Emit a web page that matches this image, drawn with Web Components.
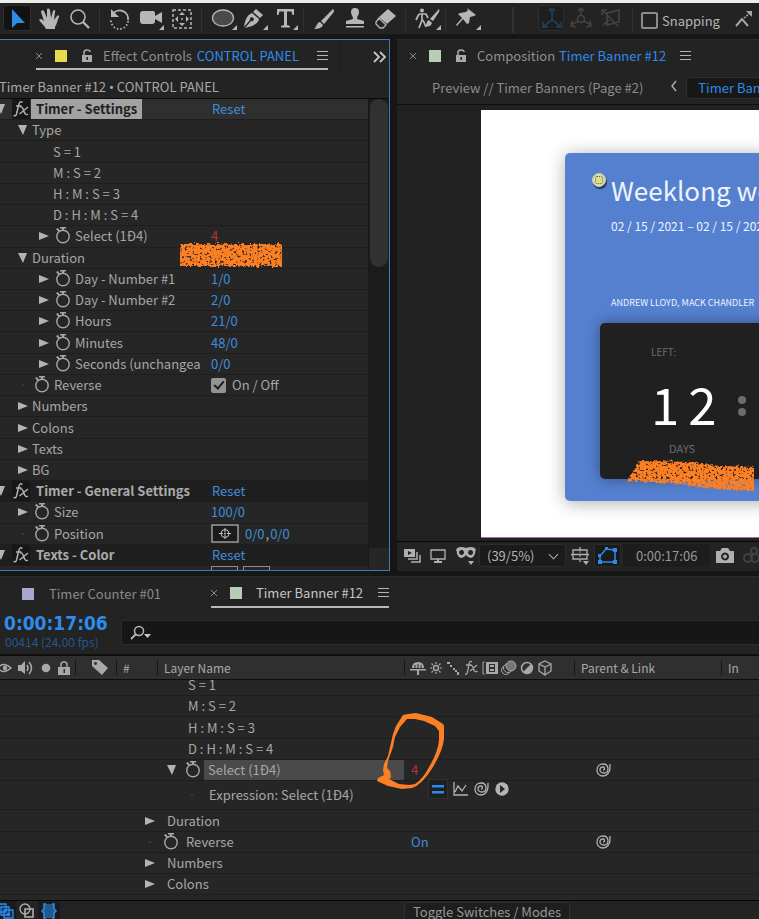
<!DOCTYPE html>
<html lang="en">
<head>
<meta charset="utf-8">
<title>Timer Banner #12</title>
<style>
html, body { margin: 0; height: 100%; }
body {
  --ui: "Noto Sans CJK SC", "Noto Sans", sans-serif;
  --panel: #232323; --row: #262626; --gap: #161616; --text: #a6a6a6; --blue: #3e8ddd; --accent: #2d8ceb;
  --line: #1e1e1e;
  background: var(--gap); color: var(--text); font: 13px/20px var(--ui);
}
</style>
</head>
<body>
<studio-app></studio-app>
<script>
const ICONS = {
  select: [26, 26, '<path d="M8 4v19l5-5h8z" fill="#2d8ceb"/>'],
  hand: [22, 22, '<path d="M8 21c-2-4-5-6-7-9 1-2 3-1 5 1L3 4c0-2 2-2 3-1l3 7V2c0-2 2-2 3 0l1 8 2-7c1-2 3-1 2 1l-1 8 3-4c1-1 3 0 2 1-2 4-2 7-4 10v2z"/>'],
  zoom: [22, 22, '<circle cx="9" cy="9" r="7" fill="none" stroke="currentColor" stroke-width="1.6"/><path d="M14 14l6 6" stroke="currentColor" stroke-width="2.4"/>'],
  rotate: [22, 22, '<path d="M4 6A8.300 8.300 0 0 1 19 12" fill="none" stroke="currentColor" stroke-width="1.800"/><path d="M2 1v8h8z"/><path d="M19 13A8.300 8.300 0 0 1 2 12" fill="none" stroke="currentColor" stroke-width="1.800" stroke-dasharray="1.500 2"/>'],
  camera: [24, 22, '<path d="M1 6q0-3 3-3h10q2 0 2 2v3l7-4v11l-7-4v2q0 3-3 3H4q-3 0-3-3z"/><path d="M25 17v5h-5z"/>'],
  anchor: [22, 22, '<rect x="2" y="2" width="18" height="18" fill="none" stroke="currentColor" stroke-width="1.500" stroke-dasharray="3 2"/><path d="M11 4l3 3H8zM11 18l3-3H8zM4 11l3-3v6zM18 11l-3-3v6z"/><circle cx="11" cy="11" r="1"/>'],
  ellipse: [26, 22, '<g transform="translate(2)"><ellipse cx="12" cy="10" rx="10.500" ry="8" fill="#4a4a4a" stroke="currentColor" stroke-width="1.300"/><path d="M26 17v5h-5z"/></g>'],
  pen: [26, 22, '<g transform="translate(2)"><path d="M14 1l7 6-3 3-7-6zM10 5l7 6c-1 5-6 7-14 9l6-7a2 2 0 1 0-1-1l-6 7C3 12 5 7 10 5z"/><path d="M26 17v5h-5z"/></g>'],
  type: [24, 22, '<g transform="translate(3)"><path d="M2 1h17v6h-1.500l-1-3.500H12V17l3 1v1.500H6V18l3-1V3.500H4.500l-1 3.500H2z"/><path d="M23 17v5h-5z"/></g>'],
  brush: [22, 22, '<path d="M20 1q2 1 0 4l-9 11-3-3zM7 14l3 3c-1 3-5 4-9 4 3-2 2-6 6-7z"/>'],
  stamp: [22, 22, '<path d="M7 4a4 4 0 0 1 8 0c0 3-2 4-2 7l7 2v3H2v-3l7-2c0-3-2-4-2-7z"/><path d="M2 18h18v1.500H2z"/>'],
  eraser: [22, 22, '<path d="M13 1l8 7-9 8-8-7z"/><path d="M4 10l7 7-3 3H5l-4-4v-2z" fill="none" stroke="currentColor" stroke-width="1.300"/>'],
  roto: [26, 22, '<g transform="translate(2)"><circle cx="7" cy="2.500" r="2"/><path d="M4 6h7l2 4M4 6l-3 6M7 6v6l-3 8M8 12l3 7" fill="none" stroke="currentColor" stroke-width="1.700"/><path d="M24 1q1 2 0 3l-6 9-3-2zM14 12l3 3c-1 3-3 4-7 3 2-1 1-5 4-6zM26 17v5h-5z"/></g>'],
  pin: [24, 22, '<g transform="translate(2)"><path d="M11 0l9 7-2 1-4 1-1 6-2 1-4-5-6 7-1-1 6-7-4-4 2-1 6-1 2-2z"/><path d="M25 17v5h-5z"/></g>'],
  axisL: [26, 26, '<path d="M13 15V4M13 15l-8 6M13 15l8 6M10 6l3-3 3 3M4 17v5h5M22 17v5h-5" fill="none" stroke="#1e3d5c" stroke-width="1.800"/>'],
  axisW: [26, 26, '<g fill="none" stroke="#444" stroke-width="1.500"><circle cx="13" cy="14" r="3.500"/><path d="M13 10V3M10 6l3-3 3 3M10 16l-7 4M16 16l7 4M4 16l-1 5 5 1M22 16l1 5-5 1"/></g>'],
  axisV: [26, 26, '<g fill="none" stroke="#444" stroke-width="1.500"><path d="M4 5l16 16M4 10V5h5M9 8l12-3v12l-12 3zM5 20l6-5"/></g>'],
  snap: [20, 22, '<path d="M2 17l6-7 6 7" fill="none" stroke="currentColor" stroke-width="2"/><path d="M10 9l6-5" stroke="currentColor" stroke-width="1.500" stroke-dasharray="2 1"/><path d="M12 2h6v6z"/>'],
  lock: [12, 14, '<path d="M1 6h10v7H1z"/><path d="M3 6V3.500Q3 1 6 1t3 2" fill="none" stroke="currentColor" stroke-width="1.500"/><path d="M5.500 8h1.500v3H5.500z" fill="#232323"/>'],
  shut: [12, 14, '<path d="M0 6h12v8H0z"/><path d="M3 6V3.500Q3 1 6 1t3 2.500V6" fill="none" stroke="currentColor" stroke-width="1.500"/><path d="M5.500 8h1.500v4H5.500z" fill="#2d2d2d"/>'],
  menu: [11, 10, '<path d="M0 0h11v1H0zM0 4h11v1H0zM0 8h11v1H0z"/>'],
  close: [6, 6, '<path d="M0 0l6 6M6 0L0 6" stroke="currentColor" fill="none"/>'],
  more: [14, 12, '<path d="M1 1l5 5-5 5M7 1l5 5-5 5" fill="none" stroke="#c4c4c4" stroke-width="1.800"/>'],
  back: [6, 10, '<path d="M5 0L1 5l4 5" fill="none" stroke="currentColor" stroke-width="1.500"/>'],
  down: [10, 10, '<path d="M0 0h9L5 10z" fill="#b4b4b4"/>'],
  right: [10, 10, '<path d="M0 1v8l10-4z" fill="#b4b4b4"/>'],
  dot: [10, 10, '<path d="M4 4h2v2H4z" fill="#3a3a3a"/>'],
  watch: [18, 18, '<g transform="translate(1 -1)"><circle cx="9" cy="10.500" r="6.200" fill="none" stroke="currentColor" stroke-width="1.400"/><path d="M6 1h6v1.500H6zM8 2h2v3H8zM2 3l2-1 2 3-1.500 1z"/></g>'],
  fx: [18, 20, '<g fill="none" stroke="#b0b0b0" stroke-width="1.500"><path d="M10.500 3.500Q8 1.500 7 5L4.500 15Q4 17.500 1.500 16.500M4 7h5.500M8 8q2-1 3 2t2 4.500q1 2 3 .5M16 8L7.500 15"/></g>'],
  fxs: [14, 16, '<g fill="none" stroke="currentColor" stroke-width="1.300"><path d="M8 2Q6 0 5 4L3.500 12Q3 15 1 14M2 5h5.500M6 5.500q2-1 3 2t1.500 3.500q1 1.500 3 0M13 5l-7 6"/></g>'],
  target: [28, 19, '<rect x="1" y="1" width="26" height="17" fill="#1b1b1b" stroke="#9a9a9a" stroke-width="1.500"/><g fill="none" stroke="#c0c0c0"><circle cx="14" cy="9.500" r="4"/><path d="M14 4v4M14 11v4M8 9.500h4M16 9.500h4"/></g><circle cx="14" cy="9.500" r="1" fill="#c0c0c0"/>'],
  previews: [17, 14, '<path d="M0 0h11v8H0z"/><path d="M4 2v4l4-2z" fill="#222"/><path d="M13 3v7H4M16 6v7H7" fill="none" stroke="currentColor" stroke-width="1.500"/>'],
  monitor: [16, 14, '<path d="M1 1h14v9H1z" fill="none" stroke="currentColor" stroke-width="1.300"/><path d="M7 10h2v2h3v2H4v-2h3z"/>'],
  mask: [20, 18, '<path fill-rule="evenodd" d="M0 3q1-3 5-3 3 0 5 1 2-1 5-1 4 0 5 3-1 1-1 4-1 3-4 4-3 0-5-3-2 3-5 3-3-1-4-4 0-3-1-4zM5.500 3a2.500 2.500 0 1 0 .1 0zM14.500 3a2.500 2.500 0 1 0 .1 0z"/><path d="M12 14h6l-3 4z"/>'],
  grid: [18, 18, '<path d="M2 3h14v9H2zM9 0v15M0 7.500h18" fill="none" stroke="currentColor" stroke-width="1.300"/><path d="M9 9v3M9 4v3" stroke="#222"/><path d="M12 14h6l-3 4z"/>'],
  shape: [20, 18, '<path d="M2 15V9l6-7 9 1v12z" fill="none" stroke="#2d8ceb" stroke-width="1.500"/><path fill="#2d8ceb" d="M0 13h4v4H0zM15 13h4v4h-4zM15 1h4v4h-4zM0 7h3v3H0zM7 0h3v3H7z"/>'],
  photo: [18, 15, '<path fill-rule="evenodd" d="M0 3h4l2-3h6l2 3h4v12H0zM9 4.500a4 4 0 1 0 .1 0z"/><circle cx="9" cy="8.500" r="2"/>'],
  rings: [18, 18, '<g fill="none" stroke="#414141" stroke-width="2"><circle cx="6" cy="11" r="4"/><circle cx="13" cy="11" r="4"/><circle cx="12" cy="4" r="3"/></g>'],
  search: [22, 16, '<circle cx="9" cy="6" r="4.500" fill="none" stroke="#b8b8b8" stroke-width="1.500"/><path d="M6 9l-5 5" stroke="#b8b8b8" stroke-width="1.800"/><path d="M14 9h7l-3.500 4z" fill="#c8c8c8"/>'],
  eye: [14, 10, '<path d="M-2 5q5-7 13 0-8 7-13 0z" fill="none" stroke="currentColor" stroke-width="1.500"/><circle cx="5" cy="5" r="2.200"/>'],
  sound: [16, 14, '<path d="M0 4h3l4-4v13L3 10H0z"/><path d="M9 4q2 3 0 6M11 1q5 6 0 12" fill="none" stroke="currentColor" stroke-width="1.500"/>'],
  solo: [10, 10, '<circle cx="5" cy="5" r="4.300"/>'],
  tag: [16, 15, '<path fill-rule="evenodd" d="M0 0h7l9 8-6 7L0 6zM3.500 2a1.500 1.500 0 1 0 .1 0z"/>'],
  shy: [16, 14, '<path d="M2 7q0-6 6-6t6 6z"/><path d="M0 8h16v1.500H0zM7 9h2v5H7z"/><path d="M5 4v3M11 4v3M8 3v4" stroke="#2d2d2d"/>'],
  sun: [14, 14, '<circle cx="7" cy="7" r="2.500" fill="none" stroke="currentColor" stroke-width="1.500"/><path d="M7 1v2M7 11v2M1 7h2M11 7h2M2.500 2.500L4 4M10 10l1.500 1.500M11.500 2.500L10 4M4 10l-1.500 1.500" stroke="currentColor" stroke-width="1.200"/>'],
  quality: [14, 14, '<path d="M1 1h3v2H1zM4 4h2v2H4zM7 7h2v2H7zM9 9h2v2H9zM11 11h2v3h-2z"/>'],
  film: [16, 14, '<path d="M4 1h12v12H4z"/><path d="M2.500 1H1v12h1.500" fill="none" stroke="currentColor"/><path d="M7 3h6v8H7z" fill="#2d2d2d"/><path d="M8 4h4v2H8zM8 8h4v2H8z"/>'],
  blur: [16, 16, '<circle cx="5" cy="10" r="4.500" fill="none" stroke="currentColor"/><circle cx="7" cy="8" r="4.500" fill="#2d2d2d" stroke="currentColor"/><circle cx="10" cy="6" r="5" fill="#777" stroke="currentColor"/>'],
  adjust: [14, 14, '<circle cx="7" cy="7" r="5.500" fill="none" stroke="currentColor" stroke-width="1.500"/><path d="M11 3A5.500 5.500 0 0 1 3 11z"/>'],
  cube: [16, 16, '<path d="M8 1l6 3v7l-6 4-6-4V4zM2 4l6 3 6-3M8 7v8" fill="none" stroke="currentColor" stroke-width="1.300"/>'],
  whip: [16, 14, '<path d="M14 1v4c0 4-3 8-7 8-3 0-6-2-6-6s3-6 6-6 5 2 5 5-2 4-4 4-4-1-4-3 1-3 3-3 2 3 0 3" fill="none" stroke="currentColor" stroke-width="1.300"/>'],
  equal: [20, 20, '<path d="M4 6h12v2.500H4zM4 12h12v2.500H4z" fill="#2d8ceb"/>'],
  graph: [16, 14, '<path d="M1 0v13h14M2 10l3-6 4 5 4-6" fill="none" stroke="currentColor" stroke-width="1.300"/>'],
  play: [14, 14, '<circle cx="7" cy="7" r="6.700"/><path d="M5 3v8l5-4z" fill="#262626"/>'],
  stack: [14, 16, '<g fill="#152c44" stroke="#2d8ceb" stroke-width="1.300"><path d="M-3 1h8v8h-8zM0 4h8v8H0zM3 7h9v8H3z"/></g><path d="M6 10h3v3H6z" fill="#2d8ceb"/>'],
  shapes: [16, 16, '<circle cx="6" cy="6" r="5" fill="none" stroke="#b0b0b0" stroke-width="1.400"/><path d="M6 6h8v8H6z" fill="none" stroke="#b0b0b0" stroke-width="1.600"/>'],
  braces: [16, 16, '<path d="M3 1h10v5l2 2-2 2v5H3v-5L1 8l2-2z" fill="#24598f"/><path d="M5 1H3v5L1 8l2 2v5h2M11 1h2v5l2 2-2 2v5h-2" fill="none" stroke="#2d8ceb" stroke-width="1.500"/>']
};

const define = (name, css, html) => customElements.define(name, class extends HTMLElement {
  connectedCallback() {
    if (this.shadowRoot) return;
    const root = this.attachShadow({ mode: 'open' });
    const t = document.createElement('template');
    t.innerHTML = `<style>*{box-sizing:border-box}button{font:inherit;color:inherit;background:none;border:0;padding:0;margin:0;display:inline-flex;align-items:center;white-space:nowrap}${css}</style>` +
      (typeof html === 'function' ? html(this) : html);
    root.append(t.content.cloneNode(true));
  }
});
const at = (el, n) => el.getAttribute(n) || '';

define('ui-icon', ':host{display:inline-block;flex:none}svg{display:block;fill:currentColor;overflow:visible}', el => {
  const [w, h, body] = ICONS[at(el, 'name')];
  return `<svg width="${w}" height="${h}" viewBox="0 0 ${w} ${h}" aria-hidden="true">${body}</svg>`;
});

define('tool-button', `:host{display:block;color:#b6b6b6}
button{width:31px;height:26px;justify-content:center}
:host([on]) button{width:28px;background:#121212;border:1px solid #2e2e2e;border-radius:3px}
:host([axis]) button{width:30px;justify-content:flex-start}
:host([axis][on]) button{width:26px;margin-right:4px;background:#1e1e1e}`,
  el => `<button type="button" aria-label="${at(el, 'label')}"><ui-icon name="${at(el, 'icon')}"></ui-icon></button>`);

define('tool-bar', `:host{display:flex;align-items:center;height:34px;padding:3px 3px 0;border-top:3px solid #ededed;background:var(--panel);overflow:hidden}
i{flex:none;width:1px;height:26px;background:#323232;margin:0 4px}
i.wide{width:2px;margin:0 24px 0 31px}
tool-button,ui-icon,label{flex:none}
tool-button:nth-of-type(2){margin-left:2px}
label{display:flex;align-items:center;gap:4px;margin:0 14px 0 4px}
input{appearance:none;width:17px;height:17px;margin:0;border:2px solid #8c8c8c;border-radius:2px}
span{color:#b6b6b6;line-height:20px;padding-top:2px}`,
  () => {
    const b = (icon, label, x = '') => `<tool-button icon="${icon}" label="${label}" ${x}></tool-button>`;
    return b('select', 'Selection', 'on') + b('hand', 'Hand') + b('zoom', 'Zoom') + '<i></i>' +
      b('rotate', 'Rotate') + b('camera', 'Camera') + b('anchor', 'Pan behind') + '<i></i>' +
      b('ellipse', 'Ellipse') + b('pen', 'Pen') + b('type', 'Type') + '<i></i>' +
      b('brush', 'Brush') + b('stamp', 'Clone stamp') + b('eraser', 'Eraser') + '<i></i>' +
      b('roto', 'Roto brush') + '<i></i>' + b('pin', 'Puppet pin') + '<i class="wide"></i>' +
      b('axisL', 'Local axis', 'axis on') + b('axisW', 'World axis', 'axis') + b('axisV', 'View axis', 'axis') + '<i></i>' +
      '<label><input type="checkbox"><span>Snapping</span></label><ui-icon name="snap"></ui-icon>';
  });

define('panel-tab', `:host{display:flex;align-items:center;height:30px;color:#8f8f8f;white-space:nowrap}
:host([active]){border-bottom:2px solid #b9b9b9}
.sw{width:12px;height:12px;background:var(--swatch)}
.x{width:6px;margin-right:13px;color:#8a8a8a}
ui-icon[name=lock]{margin-left:14px;color:#aaa}
.name{margin-left:var(--name-gap,10px)}
.menu{margin-left:14px;color:#b4b4b4}
:host([active]) .menu{margin-left:auto}`,
  el => (el.hasAttribute('plain') ? '' : '<button class="x" type="button" aria-label="Close panel"><ui-icon name="close"></ui-icon></button>') +
    '<span class="sw"></span>' + (el.hasAttribute('lock') ? '<ui-icon name="lock"></ui-icon>' : '') +
    '<button class="name" type="button"><slot></slot></button>' +
    (el.hasAttribute('plain') ? '' : '<button class="menu" type="button" aria-label="Panel menu"><ui-icon name="menu"></ui-icon></button>'));

define('value-button', ':host{display:inline-flex;color:var(--blue)}', '<button type="button"><slot></slot></button>');

define('effect-row', `:host{display:grid;grid-template-columns:201px 1fr;column-gap:10px;align-items:center;background:var(--row);border-bottom:1px solid var(--line);overflow:hidden;white-space:nowrap;min-height:0}
.name{display:flex;align-items:center;gap:4px;padding-left:var(--in)}
:host([level="0"]){background:#1f1f1f;--in:0px}
:host([level="0"][picked]){background:#2f2f2f}
:host([level="1"]){--in:18px}
:host([level="2"]){--in:39px}
:host([level=note]){--in:53px}
.fx{background:#171717;margin-left:2px;height:20px;overflow:hidden}
.twirl{width:10px}
:host([level="0"]) .twirl{margin-left:-4px}
:host([level="0"]) b{margin-left:-3px;padding:0 5px;font-weight:700;line-height:20px;color:#ababab}
:host([picked]) b{background:#a2a2a2;color:#202020}
.val{display:flex;align-items:center;gap:6px}
:host([level="0"]) .val{padding-left:1px}`,
  el => {
    const tw = at(el, 'twirl'), lv = at(el, 'level');
    return '<div class="name">' +
      (tw === 'dot' ? '<ui-icon name="dot"></ui-icon>' : tw ? `<button class="twirl" type="button" aria-label="Toggle ${at(el, 'label')}"><ui-icon name="${tw}"></ui-icon></button>` : '') +
      (lv === '0' ? '<ui-icon class="fx" name="fx"></ui-icon>' : '') +
      (el.hasAttribute('watch') ? `<button type="button" aria-label="Animate ${at(el, 'label')}"><ui-icon name="watch"></ui-icon></button>` : '') +
      (lv === '0' ? `<b>${at(el, 'label')}</b>` : `<span>${at(el, 'label')}</span>`) +
      '</div><div class="val"><slot></slot></div>';
  });

/* Felt-pen marks drawn over the panels */
define('pen-mark', ':host{display:block;pointer-events:none}svg{display:block;overflow:visible}', el => {
  const k = at(el, 'kind');
  const f = `<filter id="rough" x="-5%" y="-20%" width="110%" height="140%" color-interpolation-filters="sRGB">
<feTurbulence type="fractalNoise" baseFrequency=".4" numOctaves="2" seed="4" result="n"/>
<feDisplacementMap in="SourceGraphic" in2="n" scale="7" xChannelSelector="R" yChannelSelector="G" result="d"/>
<feColorMatrix in="n" values="0 0 0 0 0 0 0 0 0 0 0 0 0 0 0 0 0 6 0 -1.6" result="h"/>
<feComposite in="d" in2="h" operator="in"/></filter>`;
  if (k === 'bar') return `<svg width="102" height="27" viewBox="0 0 102 27">${f}<clipPath id="c"><path d="M0-3h102v34H0z"/></clipPath><g clip-path="url(#c)"><path d="M-6 3h114v22H-6z" fill="#fd7f23" filter="url(#rough)"/></g></svg>`;
  if (k === 'sweep') return `<svg width="128" height="36" viewBox="0 0 128 36">${f}<clipPath id="c"><path d="M0-4h128v44H0z"/></clipPath><g clip-path="url(#c)"><path d="M2 22L14 4q24 0 50 1l30 4 42 1v24l-32-1-32-3q-25-5-72-6z" fill="#fd7f23" filter="url(#rough)"/></g></svg>`;
  return `<svg width="70" height="78" viewBox="0 0 70 78"><path fill="#fd7f23" fill-rule="evenodd" d="M32 1l8-1 16 4 11 7 1 2v13q-1 11-11 28Q46 72 36 75l-10 1-14-3-11-5 1-3 6-3-1-5 1-6 4-8 5-22 3-8 7-11zM31 6l-7 8-5 10-2 10-5 14-1 7 3 3 1 6-2 2 10 5 10 1 6-1q8-5 14-17 9-15 10-27V18l-4-5-11-5-9-2z"/></svg>`;
});

define('effect-panel', `:host{display:flex;flex-direction:column;position:relative;background:var(--panel);border:1px solid #3c7cbc;border-left:0;min-width:0;min-height:0;overflow:hidden}
.tabs{display:flex;align-items:flex-start;padding-left:36px;height:37px}
.tabs panel-tab{width:292px;padding-top:4px;--swatch:#e5d94e}
.tabs i{width:1px;height:30px;background:#1b1b1b;margin-left:12px}
em{font-style:normal;color:var(--accent);margin-left:2px}
.more{margin:11px 0 0 32px}
.crumb{height:22px;line-height:20px;white-space:nowrap;border-bottom:1px solid #0c0c0c;color:#a8a8a8;margin-left:-1px}
.crumb span{font-family:"Noto Sans",sans-serif}
.body{flex:1;display:grid;grid-template-columns:1fr 21px;min-height:0}
.list{display:grid;grid-template-rows:repeat(22,minmax(0,1fr)) 4px;min-height:0;overflow:hidden}
.track{background:#1c1c1c;border-left:1px solid #191919;display:flex;flex-direction:column;justify-content:space-between}
.thumb{width:18px;height:168px;margin-left:1px;border-radius:9px;background:#313131}
.corner{height:22px;background:#262626}
.check{display:flex;align-items:center;gap:6px}
input{appearance:none;width:15px;height:15px;margin:0;border-radius:2px;display:grid;place-items:center;background:#949494}
input::after{content:"";width:4px;height:8px;margin-top:-2px;border:solid #1e1e1e;border-width:0 2px 2px 0;rotate:40deg}
.red{color:#b93232}
.peek{background:var(--row);display:flex;padding-left:211px;gap:5px}
.peek i{width:27px;height:6px;border:1px solid #8e8e8e}
pen-mark{position:absolute;left:180px;top:201px}`,
  () => {
    const v = t => `<value-button>${t}</value-button>`;
    const r = (lv, label, tw, watch, body = '', x = '') => `<effect-row level="${lv}" label="${label}" ${tw ? `twirl="${tw}"` : ''} ${watch ? 'watch' : ''} ${x}>${body}</effect-row>`;
    return `<div class="tabs"><panel-tab active lock>Effect Controls&nbsp; <em>CONTROL PANEL</em></panel-tab><i></i><button class="more" type="button" aria-label="More panels"><ui-icon name="more"></ui-icon></button></div>
<div class="crumb">Timer Banner #12 <span>•</span> CONTROL PANEL</div>
<div class="body"><div class="list">` +
      r('0', 'Timer - Settings', 'down', 0, v('Reset'), 'picked') + r('1', 'Type', 'down') +
      r('note', 'S = 1') + r('note', 'M : S = 2') + r('note', 'H : M : S = 3') + r('note', 'D : H : M : S = 4') +
      r('2', 'Select (1Đ4)', 'right', 1, '<value-button class="red">4</value-button>') +
      r('1', 'Duration', 'down') +
      r('2', 'Day - Number #1', 'right', 1, v('1/0')) + r('2', 'Day - Number #2', 'right', 1, v('2/0')) +
      r('2', 'Hours', 'right', 1, v('21/0')) + r('2', 'Minutes', 'right', 1, v('48/0')) +
      r('2', 'Seconds (unchangea', 'right', 1, v('0/0')) +
      r('1', 'Reverse', 'dot', 1, '<label class="check"><input type="checkbox" checked><span>On / Off</span></label>') +
      r('1', 'Numbers', 'right') + r('1', 'Colons', 'right') + r('1', 'Texts', 'right') + r('1', 'BG', 'right') +
      r('0', 'Timer - General Settings', 'down', 0, v('Reset')) +
      r('1', 'Size', 'right', 1, v('100/0')) +
      r('1', 'Position', 'dot', 1, `<button type="button" aria-label="Pick position"><ui-icon name="target"></ui-icon></button>${v('0/0')}<span style="margin:0 -5px">,</span>${v('0/0')}`) +
      r('0', 'Texts - Color', 'down', 0, v('Reset')) +
      `<div class="peek"><i></i><i></i></div></div>
<div class="track"><div class="thumb"></div><div class="corner"></div></div></div>
<pen-mark kind="bar"></pen-mark>`;
  });

define('timer-card', `:host{display:block;width:420px;height:348px;padding:20px 0 0 46px;border-radius:5px;background:#5580d0;color:#eef3fc;box-shadow:0 2px 18px rgba(0,0,0,.32);position:relative;white-space:nowrap}
h1{margin:0;font-weight:400;font-size:26px;line-height:34px}
.date{font-size:12px;line-height:18px;margin-top:10px}
.who{font-size:9px;line-height:14px;margin-top:61px}
.clock{position:relative;margin:13px 0 0 -11px;height:156px;border-radius:5px;background:#202020;box-shadow:0 0 14px rgba(0,0,0,.4);padding:22px 0 0 51px;color:#6c6c6c}
.left{font-size:10px;line-height:14px}
.num{display:flex;align-items:center;gap:9px;color:#fff;font-size:51px;line-height:62px;height:62px;margin-top:13px}
.num i{display:grid;gap:4px;margin:5px 0 0 12px}
.num i::before,.num i::after{content:"";width:8px;height:8px;border-radius:4px;background:#6c6c6c}
.days{font-size:11px;line-height:16px;margin:6px 0 0 18px}
.pin{position:absolute;left:27px;top:20px;width:14px;height:14px;border-radius:7px;background:#dcdc94;border:1px solid #c4cde0;box-shadow:1px 2px 1px #24355c;display:grid;place-items:center}
.pin::after{content:"";width:6px;height:6px;border:1px dotted #66663a;border-radius:2px}
pen-mark{position:absolute;left:26px;top:134px}`,
  `<span class="pin"></span><h1>Weeklong workshop</h1><div class="date">02 / 15 / 2021 – 02 / 15 / 2021</div><div class="who">ANDREW LLOYD, MACK CHANDLER</div>
<div class="clock"><div class="left">LEFT:</div><div class="num"><span>1</span><span>2</span><i></i></div><div class="days">DAYS</div><pen-mark kind="sweep"></pen-mark></div>`);

define('comp-panel', `:host{display:flex;flex-direction:column;background:var(--panel);min-width:0;overflow:hidden;border-top:1px solid #2a2a2a}
panel-tab{padding:0 0 0 13px;height:32px;--swatch:#b7cdb8}
em{font-style:normal;color:var(--accent);margin-left:1px}
nav{display:flex;align-items:center;height:33px;padding-left:35px;border-bottom:1px solid #0e0e0e;white-space:nowrap;overflow:hidden;color:#8b8b8b}
nav ui-icon{margin:0 9px 4px 28px;color:#aaa}
nav button{flex:none;height:21px}
nav .cur{height:22px;background:#181818;border:1px solid #2d2d2d;border-radius:3px;padding:0 11px;color:var(--accent)}
.stage{flex:1;min-height:0;overflow:hidden;background:#212121;padding:5px 0 3px 84px}
.canvas{height:100%;background:#fff;padding:43px 0 0 84px;overflow:hidden;border-bottom:1px solid #a66aa6}
.foot{display:flex;align-items:center;height:30px;border-top:1px solid #080808;padding:0 0 2px 6px;white-space:nowrap;overflow:hidden;color:#b0b0b0}
.foot>*{flex:none}
.foot button{justify-content:center}
.wrap{display:flex;align-items:center;width:87px;height:23px;background:#1b1b1b;border:1px solid #2c2c2c;border-radius:3px;margin-left:2px;position:relative}
select{appearance:none;font:inherit;font-size:13px;color:#b4b4b4;background:none;border:0;padding:0 0 0 7px;width:100%;height:22px}
.wrap::after{content:"";position:absolute;right:8px;top:6px;width:6px;height:6px;border:solid #aaa;border-width:0 1px 1px 0;rotate:45deg;pointer-events:none}
.on{width:27px;height:23px;background:#1a1a1a;border:1px solid #2c2c2c;border-radius:3px}
.time{background:#1d1d1d;height:23px;padding:0 13px;color:#989898;margin-left:2px}`,
  `<panel-tab lock>Composition&nbsp; <em>Timer Banner #12</em></panel-tab>
<nav><button type="button">Preview // Timer Banners (Page #2)</button><ui-icon name="back"></ui-icon><button class="cur" type="button">Timer Banner #12</button></nav>
<div class="stage"><div class="canvas"><timer-card></timer-card></div></div>
<div class="foot"><button type="button" aria-label="Always preview" style="width:18px"><ui-icon name="previews"></ui-icon></button>
<button type="button" aria-label="Primary viewer" style="width:34px"><ui-icon name="monitor"></ui-icon></button>
<button type="button" aria-label="Stereo view" style="width:22px"><ui-icon name="mask"></ui-icon></button>
<span class="wrap"><select aria-label="Magnification"><option>(39/5%)</option></select></span>
<button type="button" aria-label="Grid and guides" style="width:28px"><ui-icon name="grid"></ui-icon></button>
<button class="on" type="button" aria-label="Mask visibility"><ui-icon name="shape"></ui-icon></button>
<button class="time" type="button">0:00:17:06</button>
<button type="button" aria-label="Snapshot" style="width:30px"><ui-icon name="photo"></ui-icon></button>
<button type="button" aria-label="Show snapshot" style="width:22px"><ui-icon name="rings"></ui-icon></button></div>`);

define('layer-row', `:host{display:grid;grid-template-columns:404px 177px 1fr;height:21px;border-bottom:1px solid var(--line);background:var(--row);white-space:nowrap}
:host([tall]){height:29px}
:host([first]){height:15px;align-content:end;overflow:hidden}
.name{display:flex;align-items:center;padding-left:var(--in,146px)}
.tw{width:10px}
.lab{margin-left:12px}
.watch{margin-left:6px;height:18px}
.watch+.lab{margin-left:7px}
:host([picked]) .lab{flex:1;background:#4a4a4a;padding-left:4px;margin-left:3px;line-height:20px}
.sw{display:flex;align-items:center;padding-left:7px;color:var(--blue)}
.link{display:flex;align-items:center;padding-left:15px;color:#b0b0b0}`,
  el => {
    const tw = at(el, 'twirl');
    return `<div class="name" style="--in:${at(el, 'in')}px">` +
      (tw === 'dot' ? '<ui-icon class="tw" name="dot"></ui-icon>' : tw ? `<button class="tw" type="button" aria-label="Toggle ${at(el, 'label')}"><ui-icon name="${tw}"></ui-icon></button>` : '') +
      (el.hasAttribute('watch') ? `<button class="watch" type="button" aria-label="Animate ${at(el, 'label')}"><ui-icon name="watch"></ui-icon></button>` : '') +
      `<span class="lab" ${tw ? '' : 'style="margin-left:0"'}>${at(el, 'label')}</span></div><div class="sw"><slot></slot></div><div class="link">` +
      (el.hasAttribute('watch') ? '<button type="button" aria-label="Pick whip"><ui-icon name="whip"></ui-icon></button>' : '') + '</div>';
  });

define('time-line', `:host{display:block;position:relative;background:var(--panel);border-top:1px solid #2a2a2a;overflow:hidden}
.tabs{display:flex;align-items:flex-start;height:32px;padding-left:22px}
.tabs panel-tab{padding-top:3px;height:31px}
.a{--swatch:#a8a8cf;--name-gap:15px;width:189px;color:#8a8a8a}
.b{--swatch:#b7cdb8;--name-gap:14px;width:178px;color:#c6c6c6}
.head{display:flex;align-items:center;height:46px;border-bottom:1px solid #111;padding-left:4px}
.code{width:117px;flex:none;white-space:nowrap}
.code button{display:block;font:bold 19px/20px "DejaVu Sans Condensed","DejaVu Sans",sans-serif;color:var(--accent)}
.code small{display:block;font-size:12px;line-height:18px;color:#24588c;padding-left:1px}
.search{flex:1;display:flex;align-items:center;height:25px;background:#161616;border:1px solid #2b2b2b;border-right:0;border-radius:3px 0 0 3px;padding-left:8px;margin-top:2px}
input{flex:1;min-width:0;background:none;border:0;color:inherit;font:inherit}
.cols{display:grid;grid-template-columns:92px 24px 41px 247px 170px 147px 1fr;align-items:center;height:25px;border:solid #0c0c0c;border-width:1px 0;background:#2f2f2f;font-size:12px;color:#a8a8a8;white-space:nowrap}
.cols>*{display:flex;align-items:center;height:15px;border-left:1px solid #161616}
.cols>:first-child{border:0}
.cols span{display:flex}
.av{gap:4px;width:76px;border-right:1px solid #161616;height:15px}
.swi{gap:3px;padding-left:5px}
.ctl{display:flex;align-items:center;gap:5px;padding-left:17px;color:#b4b4b4;margin-top:-12px}
.ctl .eq{background:#1f1f1f;border:1px solid #303030;width:20px;height:20px;justify-content:center}
.red{color:#b93232}
layer-row:nth-of-type(4n+3){height:22px}
layer-row:first-of-type{height:16px}
.rest{height:5px;background:var(--row)}
.foot{display:flex;align-items:center;height:19px;border-top:1px solid #050505;overflow:hidden}
.foot .q{width:22px;height:20px;justify-content:center;margin-top:2px;flex:none}
.foot .on{background:#1b1b1b}
.foot .tog{margin:3px 0 0 344px;height:20px;padding:0 8px;border:1px solid #303030;border-radius:3px;background:#1e1e1e;color:#989898}
pen-mark{position:absolute;left:376px;top:136px}`,
  () => {
    const i = n => `<ui-icon name="${n}"></ui-icon>`;
    const r = (pad, label, tw = '', x = '', body = '') => `<layer-row in="${pad}" label="${label}" ${tw ? `twirl="${tw}"` : ''} ${x}>${body}</layer-row>`;
    return `<div class="tabs"><panel-tab class="a" plain>Timer Counter #01</panel-tab><panel-tab class="b" active>Timer Banner #12</panel-tab></div>
<div class="head"><div class="code"><button type="button">0:00:17:06</button><small>00414 (24.00 fps)</small></div>
<div class="search">${i('search')}<input type="search" aria-label="Search layers"></div></div>
<div class="cols"><div><span class="av" style="align-items:center">${i('eye')}${i('sound')}<span style="margin:0 3px">${i('solo')}</span>${i('shut')}</span></div>
<div style="border:0">${i('tag')}</div><div style="padding-left:6px">#</div><div style="padding-left:6px">Layer Name</div>
<div class="swi">${i('shy')}${i('sun')}${i('quality')}<span style="margin:0 1px">${i('fxs')}</span>${i('film')}${i('blur')}${i('adjust')}${i('cube')}</div>
<div style="padding-left:6px">Parent &amp; Link</div><div style="padding-left:6px">In</div></div>` +
      r(188, 'S = 1', '', 'first') + r(188, 'M : S = 2') + r(188, 'H : M : S = 3') + r(188, 'D : H : M : S = 4') +
      r(167, 'Select (1Đ4)', 'down', 'watch picked', '<value-button class="red">4</value-button>') +
      r(187, 'Expression: Select (1Đ4)', 'dot', 'tall', `<span class="ctl"><button class="eq" type="button" aria-label="Enable expression">${i('equal')}</button><button type="button" aria-label="Graph">${i('graph')}</button><button type="button" aria-label="Pick whip">${i('whip')}</button><button type="button" aria-label="Expression menu">${i('play')}</button></span>`) +
      r(145, 'Duration', 'right') + r(145, 'Reverse', 'dot', 'watch', '<value-button>On</value-button>') +
      r(145, 'Numbers', 'right') + r(145, 'Colons', 'right') +
      `<div class="rest"></div><div class="foot"><button class="q on" type="button" aria-label="Layer switches" style="width:16px">${i('stack')}</button><button class="q" type="button" aria-label="Transfer controls">${i('shapes')}</button><button class="q on" type="button" aria-label="In and out">${i('braces')}</button><button class="tog" type="button">Toggle Switches / Modes</button></div>
<pen-mark kind="loop"></pen-mark>`;
  });

define('studio-app', `:host{display:grid;grid-template-rows:auto minmax(0,1fr) auto;row-gap:5px;height:100vh;overflow:hidden}
main{display:grid;grid-template-columns:minmax(0,390px) minmax(0,1fr);column-gap:7px;min-height:0}`,
  '<tool-bar></tool-bar><main><effect-panel></effect-panel><comp-panel></comp-panel></main><time-line></time-line>');
</script>
</body>
</html>
